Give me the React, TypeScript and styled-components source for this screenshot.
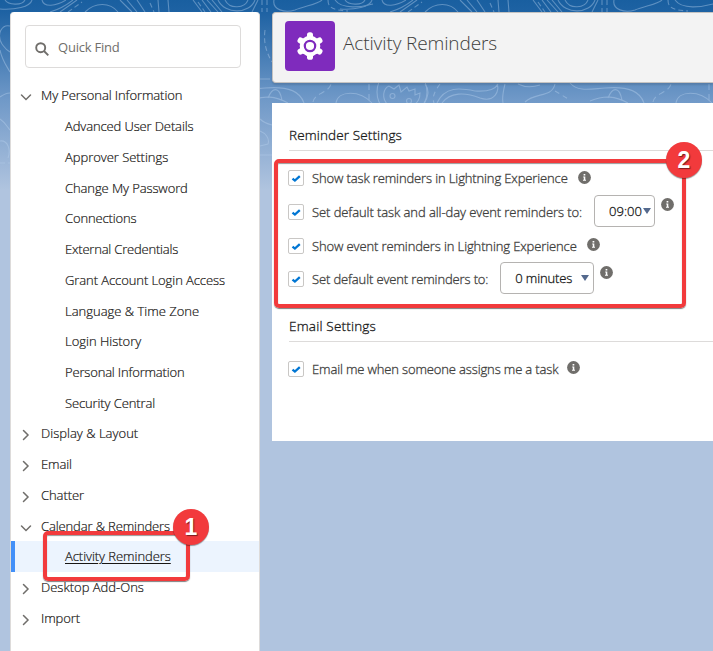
import React from "react";
import styled, { createGlobalStyle } from "styled-components";

const Global = createGlobalStyle`
  * { box-sizing: border-box; }
  body { margin: 0; overflow: hidden; font-family: "Open Sans", "Noto Sans", sans-serif; }
`;

const Page = styled.div`
  position: relative;
  display: flex;
  gap: 12px;
  width: 713px;
  height: 651px;
  padding: 12px 0 0 10px;
  overflow: hidden;
  background: linear-gradient(180deg, #195fa0 0px, #1e62a3 12px, #7099c8 100px, #b0c4df 190px, #b0c4df 100%);
`;

const Contours = styled.svg`
  position: absolute;
  inset: 0;
  fill: none;
  stroke: #b9d2ee;
  stroke-width: 1.1;
  opacity: 0.42;
`;

const Sidebar = styled.nav`
  position: relative;
  flex: none;
  width: 250px;
  height: 660px;
  padding-top: 13px;
  background: #fff;
  border: 1px solid #dddbda;
  border-top: 0;
  border-radius: 4px 4px 0 0;
`;

const Search = styled.label`
  display: flex;
  align-items: center;
  gap: 9px;
  width: 216px;
  height: 43px;
  margin: 0 0 12px 14px;
  padding: 1px 0 0 9px;
  border: 1px solid #dddbda;
  border-radius: 4px;
  color: #706e6b;
  font-size: 13px;
`;

const SearchIcon = styled.svg`
  width: 14px;
  height: 14px;
  margin-top: 4px;
  fill: none;
  stroke: #706e6b;
  stroke-width: 1.9;
`;

const Label = styled.span<{ $ls?: number }>`
  letter-spacing: ${(p) => p.$ls ?? 0}px;
  white-space: nowrap;
`;

const TreeRow = styled.div<{ $child?: boolean; $active?: boolean }>`
  display: flex;
  align-items: center;
  height: 30.74px;
  padding-left: ${(p) => (p.$child ? 54 : 9)}px;
  font-size: 13px;
  font-weight: 300;
  -webkit-text-stroke: 0.2px #181614;
  color: #181614;
  background: ${(p) => (p.$active ? "#ecf4fe" : "transparent")};
  box-shadow: ${(p) => (p.$active ? "inset 4px 0 0 #4390f8" : "none")};
  text-decoration: ${(p) => (p.$active ? "underline" : "none")};
  text-underline-offset: 2px;
`;

const Chevron = styled.svg`
  flex: none;
  width: 12px;
  height: 12px;
  margin: 4px 9px 0 0;
  fill: none;
  stroke: #706e6b;
  stroke-width: 1.5;
  stroke-linecap: round;
`;

const Main = styled.main`
  position: relative;
  flex: 1;
  min-width: 0;
`;

const Header = styled.header`
  display: flex;
  height: 71px;
  padding: 8px 12px;
  gap: 8px;
  background: #f3f3f3;
  border: 1px solid #c5c3c1;
  border-right: 0;
  border-radius: 4px 0 0 4px;
  box-shadow: 0 2px 2px rgba(0, 0, 0, 0.12);
`;

const HeaderIcon = styled.svg`
  flex: none;
  width: 50px;
  height: 50px;
  border-radius: 4px;
  background: #7f2bbd;
`;

const Title = styled.h1`
  margin: 8px 0 0;
  font-size: 19px;
  line-height: 28px;
  font-weight: 300;
  color: #3e3e3c;
`;

const Panel = styled.section`
  height: 338px;
  margin-top: 20px;
  padding: 20px 0 0 17px;
  background: #fff;
`;

const Heading = styled.h2`
  height: 28px;
  margin: 0;
  border-bottom: 1px solid #dddbda;
  font-size: 13.5px;
  font-weight: 300;
  -webkit-text-stroke: 0.3px #181818;
  line-height: 24px;
  color: #181818;
`;

const Group = styled.div<{ $space: number }>`
  height: ${(p) => p.$space}px;
  padding-top: 10.4px;
`;

const Setting = styled.div`
  display: flex;
  align-items: center;
  height: 33.7px;
  margin-left: -1px;
  font-size: 13px;
  font-weight: 300;
  -webkit-text-stroke: 0.3px currentColor;
  color: #3e3e3c;
`;

const Box = styled.svg`
  flex: none;
  width: 16px;
  height: 16px;
  margin-right: 8px;
  border: 1px solid #c9c7c5;
  border-radius: 2px;
  background: #fff;
`;

const Info = styled.svg<{ $gap: number; $up: number }>`
  flex: none;
  width: 13px;
  height: 13px;
  margin-left: ${(p) => p.$gap}px;
  margin-bottom: ${(p) => p.$up}px;
`;

const Picker = styled.button<{ $w: number; $gap: number; $pad: number }>`
  display: flex;
  align-items: center;
  justify-content: space-between;
  flex: none;
  width: ${(p) => p.$w}px;
  height: 32px;
  margin: 0 0 2.6px ${(p) => p.$gap}px;
  padding: 0 ${(p) => p.$pad}px 0 14px;
  border: 1px solid #b5b3b1;
  border-radius: 4px;
  background: #fff;
  color: #181818;
  font: inherit;
`;

const Caret = styled.span`
  border: 4.5px solid transparent;
  border-top: 6px solid #54698d;
  border-bottom: 0;
`;

const Highlight = styled.div<{ $x: number; $y: number; $w: number; $h: number }>`
  position: absolute;
  left: ${(p) => p.$x}px;
  top: ${(p) => p.$y}px;
  width: ${(p) => p.$w}px;
  height: ${(p) => p.$h}px;
  border: 4px solid #f23a3c;
  border-radius: 5px;
  box-shadow: 0 1px 1px rgba(0, 0, 0, 0.5), inset 0 1px 1px rgba(0, 0, 0, 0.4);
`;

const Step = styled.div<{ $x: number; $y: number }>`
  position: absolute;
  left: ${(p) => p.$x}px;
  top: ${(p) => p.$y}px;
  display: flex;
  align-items: center;
  justify-content: center;
  width: 36px;
  height: 36px;
  border-radius: 50%;
  background: #f23a3c;
  box-shadow: 0 1px 1px rgba(0, 0, 0, 0.4);
  color: #fff;
  font: 700 23px/36px "Liberation Sans", Arial, sans-serif;
  text-shadow: 1px 1px 1px rgba(0, 0, 0, 0.5);
`;

type Item = { text: string; ls?: number; child?: boolean; active?: boolean; open?: boolean };

const items: Item[] = [
  { text: "My Personal Information", ls: -0.09, open: true },
  { text: "Advanced User Details", ls: -0.12, child: true },
  { text: "Approver Settings", ls: -0.04, child: true },
  { text: "Change My Password", ls: -0.1, child: true },
  { text: "Connections", ls: -0.14, child: true },
  { text: "External Credentials", ls: -0.2, child: true },
  { text: "Grant Account Login Access", ls: -0.08, child: true },
  { text: "Language & Time Zone", child: true },
  { text: "Login History", ls: -0.02, child: true },
  { text: "Personal Information", ls: -0.17, child: true },
  { text: "Security Central", ls: -0.12, child: true },
  { text: "Display & Layout", ls: 0.02 },
  { text: "Email", ls: -0.1 },
  { text: "Chatter", ls: -0.08 },
  { text: "Calendar & Reminders", ls: -0.12, open: true },
  { text: "Activity Reminders", ls: -0.06, child: true, active: true },
  { text: "Desktop Add-Ons" },
  { text: "Import", ls: -0.1 },
];

const Check = () => (
  <Box viewBox="0 0 14 14">
    <path d="M3.5 7.6 L5.9 9.6 L10.8 5.2" fill="none" stroke="#0176d3" strokeWidth="2.3" />
  </Box>
);

const InfoIcon = ({ gap, up }: { gap: number; up: number }) => (
  <Info viewBox="0 0 13 13" $gap={gap} $up={up}>
    <circle cx="6.5" cy="6.5" r="6.4" fill="#706e6b" />
    <path d="M5.6 3h1.7v1.5H5.600zM5.200 5.500h2.100v3.300h.7v.9H5v-.9h.8V6.400h-.6z" fill="#fff" />
  </Info>
);

const Topography = () => (
  <Contours viewBox="0 0 713 200" width="713" height="200">
    <defs>
      <g id="ridge">
        <path d="M0 9C15 10 30 7 32 0M5 0C8 5 22 6 25 0M42 0C44 8 56 6 66 0M50 12C60 9 68 4 73 0M60 12L77 0M85 12C95 2 110 2 118 12M120 0l12 12M127 0l10 12M137 0l8 12M158 0l1 12M168 0l1 12M193 0l9 12M202 0l9 12M207 0l11 12M212 0l10 12M218 0C225 15 250 14 255 0M225 0C230 10 245 8 248 0M252 12l6-12M274 0C272 10 285 13 295 10C305 6 318 4 322 0M335 0C342 10 362 7 373 4" />
        <path d="M68 12L82 2M150 3l4 9M198 2l7 10M262 0v12M267 0v12M328 0C328 9 335 10 348 11" strokeDasharray="5 3" />
      </g>
      <g id="valley">
        <path d="M230 83C238 92 250 89 265 88C290 86 300 92 304 103M250 101C265 95 275 96 288 103M268 98C272 88 279 85 282 100M336 103C338 90 360 90 372 103" />
        <path d="M313 102C315 92 328 94 331 84M369 84v19" strokeDasharray="6 4" />
      </g>
    </defs>
    <use href="#ridge" />
    <use href="#ridge" x="340" />
    <use href="#valley" />
    <use href="#valley" x="340" />
    <circle cx="402" cy="92" r="25" />
    <path d="M389 106C380 98 384 88 389 86l5 3 5-4 2 7 6-5 2 4 6-2v6l5-2c0 6-3 10-6 12" />
    <circle cx="392.500" cy="96" r="2.500" />
    <circle cx="409" cy="101" r="2.500" />
    <path d="M425 84C430 90 428 98 424 103M437 103C445 86 460 88 475 91C490 92 496 88 498 84M442 103C450 92 465 92 480 98C495 103 500 90 497 84M505 84C503 92 502 98 503 103M518 84q10 5 22 1M525 102C535 92 552 98 555 84" />
    <path d="M440 84C434 92 432 98 434 103M555 91L570 100" strokeDasharray="5 4" />
    <path d="M10 26C2 24-4 34 2 44C5 48 6 50 10 52M0 50C2 60 6 65 10 72M0 97C4 94 8 93 10 93M0 119C6 123 8 128 10 130M0 141C8 140 11 150 8 158M260 79h10M260 131C265 133 270 138 268 144L260 146M260 155h12M260 119C264 123 268 124 272 125" />
    <path d="M265 30C263 45 268 55 272 62M0 163h10" strokeDasharray="5 3" />
  </Contours>
);

export default function App() {
  return (
    <Page>
      <Global />
      <Topography />
      <Sidebar>
        <Search>
          <SearchIcon viewBox="0 0 14 14">
            <circle cx="5.700" cy="5.700" r="4.500" />
            <path d="M9 9l4.300 4.300" />
          </SearchIcon>
          <Label $ls={-0.22}>Quick Find</Label>
        </Search>
        {items.map((i) => (
          <TreeRow key={i.text} $child={i.child} $active={i.active}>
            {!i.child && (
              <Chevron viewBox="0 0 12 12">
                <path d={i.open ? "M1.500 4l4.500 4.500L10.500 4" : "M3.500 1.500L8 6l-4.500 4.500"} />
              </Chevron>
            )}
            <Label $ls={i.ls}>{i.text}</Label>
          </TreeRow>
        ))}
      </Sidebar>
      <Main>
        <Header>
          <HeaderIcon viewBox="0 0 50 50">
            <g fill="#fff">
              <circle cx="25" cy="25" r="10.300" />
              {[0, 60, 120].map((a) => (
                <rect key={a} x="22" y="11.200" width="6" height="27.600" rx="2.600" transform={`rotate(${a} 25 25)`} />
              ))}
            </g>
            <circle cx="25" cy="25" r="5.200" fill="#fff" stroke="#7f2bbd" strokeWidth="2.200" />
          </HeaderIcon>
          <Title><Label $ls={-0.12}>Activity Reminders</Label></Title>
        </Header>
        <Panel>
          <Heading><Label $ls={0.13}>Reminder Settings</Label></Heading>
          <Group $space={163}>
            <Setting><Check /><Label $ls={-0.13}>Show task reminders in Lightning Experience</Label><InfoIcon gap={10} up={2} /></Setting>
            <Setting><Check /><Label $ls={-0.08}>Set default task and all-day event reminders to:</Label>
              <Picker $w={61} $gap={12} $pad={3}><Label>09:00</Label><Caret /></Picker><InfoIcon gap={5.5} up={14} /></Setting>
            <Setting><Check /><Label $ls={-0.12}>Show event reminders in Lightning Experience</Label><InfoIcon gap={10} up={2} /></Setting>
            <Setting><Check /><Label $ls={-0.13}>Set default event reminders to:</Label>
              <Picker $w={94} $gap={12} $pad={4}><Label $ls={-0.15}>0 minutes</Label><Caret /></Picker><InfoIcon gap={5.5} up={14} /></Setting>
          </Group>
          <Heading><Label $ls={0.2}>Email Settings</Label></Heading>
          <Group $space={60}>
            <Setting><Check /><Label $ls={-0.14}>Email me when someone assigns me a task</Label><InfoIcon gap={9} up={3} /></Setting>
          </Group>
        </Panel>
      </Main>
      <Highlight $x={274} $y={159} $w={412} $h={149} />
      <Highlight $x={43} $y={531} $w={147} $h={50} />
      <Step $x={173} $y={509}>1</Step>
      <Step $x={666} $y={142}>2</Step>
    </Page>
  );
}
